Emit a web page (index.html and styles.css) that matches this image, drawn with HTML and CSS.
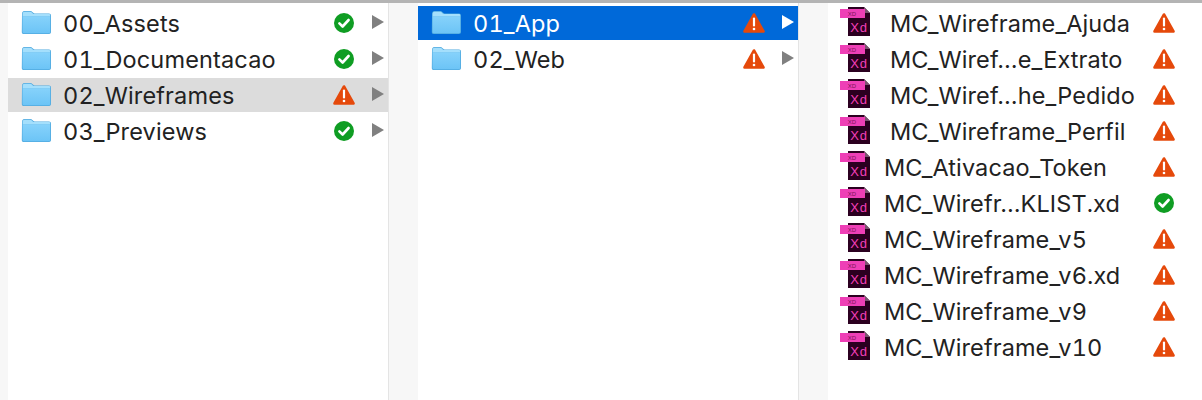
FILE: index.html
```html
<!DOCTYPE html>
<html lang="pt-BR">
<head>
  <meta charset="UTF-8" />
  <title>Finder</title>
  <link rel="stylesheet" href="styles.css">
</head>
<body>
  <svg class="defs" width="0" height="0">
    <defs>
      <linearGradient id="folderGrad" x1="0" y1="0" x2="0" y2="1">
        <stop offset="0" stop-color="#86d2fb" />
        <stop offset="1" stop-color="#6cc4f6" />
      </linearGradient>
      <symbol id="folder" viewBox="0 0 30 24">
        <path d="M1 4.500C1 2.200 1.600 1 3.500 1H9.500C11 1 11.500 3 13.500 3.400H28C29.200 3.400 30 4.200 30 5.400V22C30 23.200 29.200 24 28 24H2.500C1.300 24 .8 23.200 .8 22Z" fill="#4fa9df" />
        <path d="M1.500 6.200H29.200V21.800C29.200 22.800 28.700 23.200 27.800 23.200H2.900C2 23.200 1.500 22.800 1.500 21.800Z" fill="url(#folderGrad)" />
        <path d="M1.600 5C1.600 2.600 2 1.700 3.600 1.700H9.300C10.800 1.700 11.200 3.900 13.400 4.100H27.800C28.700 4.100 29.200 4.600 29.200 5.500V6.200H1.600Z" fill="#a4dffc" />
      </symbol>
      <symbol id="ok" viewBox="0 0 20 20">
        <circle cx="10" cy="10" r="10" fill="#0f9d23" />
        <path d="M5.400 10.400L8.600 13.500L14.600 7" fill="none" stroke="#fff" stroke-width="2.600" stroke-linecap="round" stroke-linejoin="round" />
      </symbol>
      <symbol id="warn" viewBox="0 0 22 20">
        <path d="M11 1.500L20.500 18.500H1.500Z" fill="#e5490b" stroke="#e5490b" stroke-width="2.600" stroke-linejoin="round" />
        <path d="M11 5.500V12.500" stroke="#fff" stroke-width="2.200" stroke-linecap="round" />
        <circle cx="11" cy="16" r="1.300" fill="#fff" />
      </symbol>
      <symbol id="xd" viewBox="0 0 30 30">
        <path d="M8 0H24L30 6V29H8Z" fill="#2b0020" />
        <path d="M24 0L30 6H24Z" fill="#7a5570" />
        <path d="M0 2H25V11H0Z" fill="#ee3fb6" />
        <text class="xd-tiny" x="12" y="9">XD</text>
        <text class="xd-mark" x="19" y="25">Xd</text>
      </symbol>
    </defs>
  </svg>

  <div class="finder">
    <div class="column">
      <div class="row"><svg class="folder"><use href="#folder" /></svg><span class="name">00_Assets</span><svg class="status"><use href="#ok" /></svg><span class="arrow"></span></div>
      <div class="row"><svg class="folder"><use href="#folder" /></svg><span class="name">01_Documentacao</span><svg class="status"><use href="#ok" /></svg><span class="arrow"></span></div>
      <div class="row inactive"><svg class="folder"><use href="#folder" /></svg><span class="name">02_Wireframes</span><svg class="status"><use href="#warn" /></svg><span class="arrow"></span></div>
      <div class="row"><svg class="folder"><use href="#folder" /></svg><span class="name">03_Previews</span><svg class="status"><use href="#ok" /></svg><span class="arrow"></span></div>
    </div>

    <div class="column">
      <div class="row selected"><svg class="folder"><use href="#folder" /></svg><span class="name">01_App</span><svg class="status"><use href="#warn" /></svg><span class="arrow"></span></div>
      <div class="row"><svg class="folder"><use href="#folder" /></svg><span class="name">02_Web</span><svg class="status"><use href="#warn" /></svg><span class="arrow"></span></div>
    </div>

    <div class="column files">
      <div class="row"><svg class="file"><use href="#xd" /></svg><span class="name indent">MC_Wireframe_Ajuda</span><svg class="status"><use href="#warn" /></svg></div>
      <div class="row"><svg class="file"><use href="#xd" /></svg><span class="name indent">MC_Wiref…e_Extrato</span><svg class="status"><use href="#warn" /></svg></div>
      <div class="row"><svg class="file"><use href="#xd" /></svg><span class="name indent">MC_Wiref…he_Pedido</span><svg class="status"><use href="#warn" /></svg></div>
      <div class="row"><svg class="file"><use href="#xd" /></svg><span class="name indent">MC_Wireframe_Perfil</span><svg class="status"><use href="#warn" /></svg></div>
      <div class="row"><svg class="file"><use href="#xd" /></svg><span class="name">MC_Ativacao_Token</span><svg class="status"><use href="#warn" /></svg></div>
      <div class="row"><svg class="file"><use href="#xd" /></svg><span class="name">MC_Wirefr…KLIST.xd</span><svg class="status"><use href="#ok" /></svg></div>
      <div class="row"><svg class="file"><use href="#xd" /></svg><span class="name">MC_Wireframe_v5</span><svg class="status"><use href="#warn" /></svg></div>
      <div class="row"><svg class="file"><use href="#xd" /></svg><span class="name">MC_Wireframe_v6.xd</span><svg class="status"><use href="#warn" /></svg></div>
      <div class="row"><svg class="file"><use href="#xd" /></svg><span class="name">MC_Wireframe_v9</span><svg class="status"><use href="#warn" /></svg></div>
      <div class="row"><svg class="file"><use href="#xd" /></svg><span class="name">MC_Wireframe_v10</span><svg class="status"><use href="#warn" /></svg></div>
    </div>
  </div>
</body>
</html>
```

FILE: styles.css
```css
html, body {
  margin: 0;
  height: 400px;
  overflow: hidden;
}

body {
  background: #f7f7f7;
  color: #222;
  font-family: Inter, sans-serif;
  font-size: 23.5px;
  font-variant-numeric: tabular-nums;
  letter-spacing: 0.15px;
}

.defs {
  display: block;
  height: 0;
}

.finder {
  display: flex;
  height: 397px;
  padding-left: 8px;
  gap: 29px;
  border-top: 3px solid #b4b4b4;
}

.column {
  width: 381px;
  height: 100%;
  box-sizing: border-box;
  padding-top: 3px;
  background: #fff;
  border-right: 1px solid #e4e4e4;
}

.column.files {
  flex: 1;
  border-right: none;
  letter-spacing: 0.1px;
}

.row {
  display: flex;
  align-items: center;
  height: 34px;
  margin-bottom: 2px;
}

.inactive {
  background: #dcdcdc;
}

.selected {
  background: #0069d9;
  color: #fff;
}

.folder {
  width: 30px;
  height: 24px;
  margin: 0 0 2px 13px;
  flex: none;
}

.file {
  width: 30px;
  height: 30px;
  margin: 1px 0 0 12px;
  align-self: flex-start;
  flex: none;
}

.name {
  margin-left: 12px;
  flex: 1;
  white-space: nowrap;
}

.files .name {
  margin-left: 14px;
}

.files .name.indent {
  margin-left: 20px;
}

.status {
  width: 22px;
  height: 20px;
  flex: none;
}

.files .status {
  margin-right: 27px;
}

.arrow {
  width: 0;
  height: 0;
  margin: 0 4px 0 17px;
  border-left: 12px solid #808080;
  border-top: 7px solid transparent;
  border-bottom: 7px solid transparent;
  transform: translateY(-1px);
}

.selected .arrow {
  border-left-color: #fff;
}

.xd-tiny {
  font-family: "Liberation Sans", sans-serif;
  font-size: 6px;
  fill: #7a1458;
  text-anchor: middle;
}

.xd-mark {
  font-family: "Liberation Sans", sans-serif;
  font-size: 13px;
  letter-spacing: 0.8px;
  fill: #f23fb8;
  text-anchor: middle;
}
```
